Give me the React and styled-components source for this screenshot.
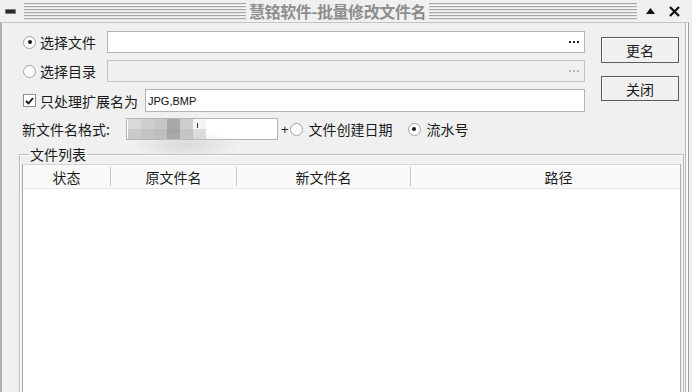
import React from 'react';
import styled, { createGlobalStyle } from 'styled-components';

const GlobalStyle = createGlobalStyle`
  html, body { margin: 0; padding: 0; background: #fff; }
  body { font-family: "Noto Sans CJK SC", "Noto Sans", sans-serif; color: #1a1a1a; }
`;

const Window = styled.div`
  width: 692px;
  height: 392px;
  background: #f0f0f0;
  display: flex;
  flex-direction: column;
  overflow: hidden;
`;

const TitleBar = styled.div`
  height: 22px;
  flex: none;
  display: flex;
  align-items: center;
`;

const MinIcon = styled.span`
  width: 9px;
  height: 3px;
  margin: 0 0 0 5px;
  background: #2a2a2a;
  border: 1px solid #777;
  border-radius: 1px;
  flex: none;
`;

const Stripes = styled.span`
  height: 17px;
  width: ${p => p.$w}px;
  margin-left: ${p => p.$ml || 0}px;
  flex: none;
  background: repeating-linear-gradient(to bottom, #a6a6a6 0 1px, #e6e6e6 1px 2px, #f6f6f6 2px 3px);
`;

const Title = styled.span`
  margin-left: 3px;
  font-size: 16px;
  line-height: 20px;
  font-weight: 700;
  color: #8e8e8e;
  letter-spacing: -0.4px;
  white-space: nowrap;
`;

const TitleBtn = styled.span`
  margin-left: ${p => p.$ml}px;
  display: flex;
  align-items: center;
`;

const Body = styled.div`
  flex: 1;
  border-top: 1px solid #c4c4c4;
  border-left: 2px solid #b0b0b0;
  border-right: 1px solid #9c9c9c;
  box-shadow: inset -2px 0 0 #fafafa, inset -3px 0 0 #b8b8b8;
  width: 689px;
  box-sizing: border-box;
  padding: 8px 0 0 17px;
  display: flex;
  flex-direction: column;
`;

const TopArea = styled.div`
  display: flex;
  align-items: flex-start;
`;

const Form = styled.div`
  width: 566px;
  display: flex;
  flex-direction: column;
  gap: 7px;
`;

const Row = styled.div`
  display: flex;
  align-items: center;
  height: ${p => p.$h || 22}px;
  padding-left: ${p => p.$pl ?? 4}px;
`;

const Label = styled.span`
  font-size: 14px;
  line-height: 18px;
  margin-left: ${p => p.$ml ?? 4}px;
  width: ${p => (p.$w ? `${p.$w}px` : 'auto')};
  white-space: nowrap;
  flex: none;
`;

const Radio = styled.span`
  width: 13px;
  height: 13px;
  box-sizing: border-box;
  border-radius: 50%;
  border: 1px solid #a2a2a2;
  background: #fff;
  display: inline-flex;
  align-items: center;
  justify-content: center;
  margin-left: ${p => p.$ml || 0}px;
  flex: none;
  &::after {
    content: '';
    width: 4px;
    height: 4px;
    border-radius: 50%;
    background: ${p => (p.$checked ? '#1a1a1a' : 'transparent')};
  }
`;

const CheckBox = styled.span`
  width: 13px;
  height: 13px;
  box-sizing: border-box;
  border: 1px solid #8e8e8e;
  background: #fff;
  display: inline-flex;
  align-items: center;
  justify-content: center;
  flex: none;
`;

const TextBox = styled.div`
  height: 100%;
  box-sizing: border-box;
  width: ${p => (p.$w ? `${p.$w}px` : 'auto')};
  flex: ${p => (p.$w ? 'none' : '1')};
  margin-left: ${p => p.$ml || 0}px;
  border: 1px solid ${p => (p.$disabled ? '#c4c4c4' : '#b4b4b4')};
  background: ${p => (p.$disabled ? '#f0f0f0' : '#fff')};
  display: flex;
  align-items: center;
  justify-content: ${p => (p.$browse ? 'flex-end' : 'flex-start')};
  padding: 0 4px 0 2px;
  position: relative;
  font-family: "Liberation Sans", Arial, sans-serif;
  font-size: 11px;
  color: #111;
`;

const Dots = styled.span`
  display: flex;
  gap: 2px;
  margin-right: 1px;
  & > i {
    width: 2px;
    height: 2px;
    background: ${p => (p.$dim ? '#b4b4b4' : '#222')};
  }
`;

const Buttons = styled.div`
  display: flex;
  flex-direction: column;
  gap: 13px;
  padding-top: 6px;
  margin-left: 16px;
`;

const Button = styled.div`
  width: 78px;
  height: ${p => p.$h}px;
  box-sizing: border-box;
  border: 1px solid #5c5c5c;
  box-shadow: inset 1px 1px 0 #fff;
  background: #f0f0f0;
  display: flex;
  align-items: center;
  justify-content: center;
  font-size: 14px;
  line-height: 18px;
`;

const FormatRow = styled(Row)`
  margin-top: 6px;
  padding-left: 3px;
`;

const Plus = styled.span`
  font-family: "Liberation Sans", Arial, sans-serif;
  font-size: 13px;
  margin: 0 1px 0 3px;
`;

const Pixels = styled.div`
  display: grid;
  grid-template-columns: repeat(6, 13px);
  grid-auto-rows: 10px;
  margin-left: -1px;
  & > i { display: block; }
`;

const Caret = styled.span`
  position: absolute;
  left: 70px;
  top: 4px;
  width: 1px;
  height: 5px;
  background: #333;
`;

const Smudge = styled.span`
  position: absolute;
  left: 4px;
  top: 12px;
  width: 110px;
  height: 26px;
  border-radius: 50%;
  background: radial-gradient(ellipse at 50% 55%, rgba(200,200,200,0.55), rgba(220,220,220,0) 70%);
  pointer-events: none;
`;

const FieldSet = styled.fieldset`
  margin: 6px 0 0 0;
  padding: 0 2px 0 2px;
  width: 665px;
  box-sizing: border-box;
  border: 1px solid #bdbdbd;
  box-shadow: inset 1px 1px 0 #fff;
  min-width: 0;
`;

const Legend = styled.legend`
  padding: 0 1px;
  margin-left: 7px;
  font-size: 14px;
  line-height: 16px;
`;

const List = styled.div`
  margin-top: 2px;
  height: 250px;
  background: #fff;
  border-left: 1px solid #a8a8a8;
  border-right: 1px solid #a8a8a8;
  border-top: 1px solid #d6d6d6;
`;

const Header = styled.div`
  height: 23px;
  display: flex;
  background: #fafafa;
  border-bottom: 1px solid #e8e8e8;
`;

const HeadCell = styled.div`
  width: ${p => (p.$w ? `${p.$w}px` : 'auto')};
  flex: ${p => (p.$w ? 'none' : '1')};
  padding-left: ${p => p.$pl || 0}px;
  border-right: ${p => (p.$last ? 'none' : '1px solid #c8c8c8')};
  margin: 2px 0;
  display: flex;
  align-items: center;
  justify-content: center;
  font-size: 14px;
  line-height: 18px;
`;

const pixelColors = [
  '#d9d9d9', '#cfcfcf', '#c7c7c7', '#a9a9a9', '#cecece', '#f4f4f4',
  '#c9c9c9', '#c3c3c3', '#bdbdbd', '#a3a3a3', '#c5c5c5', '#dedede',
];

const Check = () => (
  <svg width="9" height="8" viewBox="0 0 9 8">
    <path d="M1 4 L3.5 6.5 L8 1" fill="none" stroke="#111" strokeWidth="1.8" />
  </svg>
);

const Ellipsis = ({ dim }) => (
  <Dots $dim={dim}>
    <i /><i /><i />
  </Dots>
);

export default function App() {
  return (
    <>
      <GlobalStyle />
      <Window>
        <TitleBar>
          <MinIcon />
          <Stripes $w={222} $ml={8} />
          <Title>慧铭软件-批量修改文件名</Title>
          <Stripes $w={208} $ml={3} />
          <TitleBtn $ml={9}>
            <svg width="9" height="6" viewBox="0 0 9 6"><path d="M0 6 L4.5 0 L9 6 Z" fill="#111" /></svg>
          </TitleBtn>
          <TitleBtn $ml={14}>
            <svg width="11" height="11" viewBox="0 0 11 11">
              <path d="M1 1 L10 10 M10 1 L1 10" stroke="#111" strokeWidth="2.2" />
            </svg>
          </TitleBtn>
        </TitleBar>
        <Body>
          <TopArea>
            <Form>
              <Row>
                <Radio $checked />
                <Label $w={67}>选择文件</Label>
                <TextBox $browse>
                  <Ellipsis />
                </TextBox>
              </Row>
              <Row>
                <Radio />
                <Label $w={67}>选择目录</Label>
                <TextBox $browse $disabled>
                  <Ellipsis dim />
                </TextBox>
              </Row>
              <Row $h={23}>
                <CheckBox><Check /></CheckBox>
                <Label $w={105}>只处理扩展名为</Label>
                <TextBox>JPG,BMP</TextBox>
              </Row>
            </Form>
            <Buttons>
              <Button $h={26}>更名</Button>
              <Button $h={25}>关闭</Button>
            </Buttons>
          </TopArea>
          <FormatRow>
            <Label $ml={0} $w={104}>新文件名格式:</Label>
            <TextBox $w={152}>
              <Pixels>
                {pixelColors.map((c, i) => (
                  <i key={i} style={{ background: c }} />
                ))}
              </Pixels>
              <Caret />
              <Smudge />
            </TextBox>
            <Plus>+</Plus>
            <Radio />
            <Label $ml={6}>文件创建日期</Label>
            <Radio $ml={15} $checked />
            <Label $ml={6}>流水号</Label>
          </FormatRow>
          <FieldSet>
            <Legend>文件列表</Legend>
            <List>
              <Header>
                <HeadCell $w={87}>状态</HeadCell>
                <HeadCell $w={125}>原文件名</HeadCell>
                <HeadCell $w={173}>新文件名</HeadCell>
                <HeadCell $pl={26} $last>路径</HeadCell>
              </Header>
            </List>
          </FieldSet>
        </Body>
      </Window>
    </>
  );
}
